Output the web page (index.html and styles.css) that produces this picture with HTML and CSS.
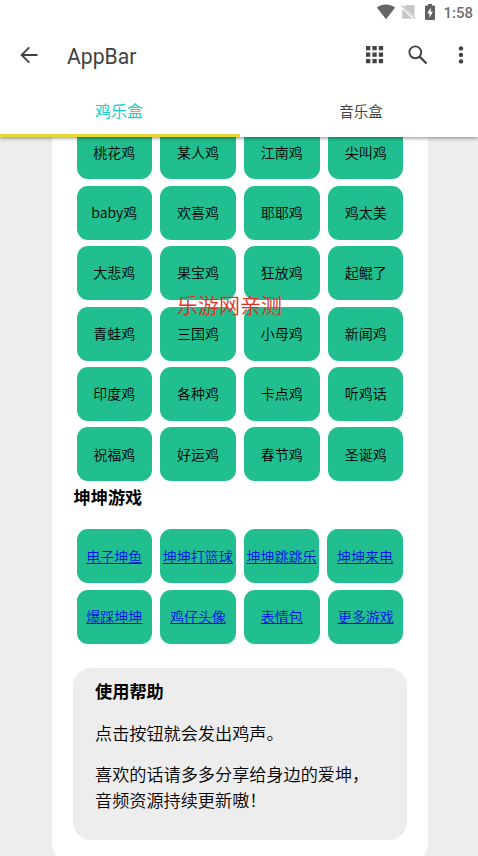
FILE: index.html
```html
<!DOCTYPE html>
<html lang="zh-CN">
<head>
<meta charset="utf-8">
<meta name="viewport" content="width=device-width, initial-scale=1">
<title>AppBar</title>
<link rel="stylesheet" href="styles.css">
</head>
<body>
<header class="header">
  <div class="status">
    <svg class="wifi" width="20" height="16" viewBox="0 0 20 16"><path d="M.8 3.6C6-.5 14-.5 19.200 3.600L10 15.300Z" fill="#666"/></svg>
    <svg class="sim" width="15" height="16" viewBox="0 0 15 16"><path d="M5 1h7.500q1 0 1 1v10.500L3.300 2.700ZM1.200 4.800 11.200 14.800H2.200q-1 0-1-1Z" fill="#c6c6c6"/><path d="M.8 1.500 14 14.700" stroke="#bbb" stroke-width="1.100"/></svg>
    <svg class="battery" width="10" height="16" viewBox="0 0 10 16"><path d="M3 0h4v1.500h2q1 0 1 1V15q0 1-1 1H1q-1 0-1-1V2.500q0-1 1-1h2Z" fill="#616161"/><path d="M5.800 3.700 2.200 9.500h2.300v4.200L7.900 7.800H5.800Z" fill="#fff"/></svg>
    <span class="clock">1:58</span>
  </div>
  <div class="toolbar">
    <svg class="back" width="18" height="18" viewBox="0 0 18 18" fill="none" stroke="#424242" stroke-width="1.900"><path d="M17.500 9H2M9.300 1.300 1.600 9l7.700 7.700"/></svg>
    <h1 class="title">AppBar</h1>
    <svg class="apps" width="18" height="18" viewBox="0 0 18 18" fill="#424242"><path d="M0 0h4.300v4.300H0zM6.400 0h4.300v4.300H6.400zM12.800 0h4.300v4.300H12.800zM0 6.500h4.300v4.300H0zM6.400 6.500h4.300v4.300H6.400zM12.800 6.500h4.300v4.300H12.800zM0 13h4.300v4.300H0zM6.400 13h4.300v4.300H6.400zM12.800 13h4.300v4.300H12.800z"/></svg>
    <svg class="search" width="20" height="20" viewBox="0 0 20 20" fill="none" stroke="#424242"><circle cx="7.300" cy="7.300" r="5.900" stroke-width="1.900"/><path d="m11.600 11.600 6.900 6.900" stroke-width="2.200"/></svg>
    <svg class="more" width="6" height="18" viewBox="0 0 6 18" fill="#424242"><circle cx="3" cy="2.400" r="2.200"/><circle cx="3" cy="8.900" r="2.200"/><circle cx="3" cy="15.400" r="2.200"/></svg>
  </div>
  <nav class="tabs">
    <div class="tab active">鸡乐盒</div>
    <div class="tab">音乐盒</div>
  </nav>
</header>
<main class="view">
  <div class="card">
    <div class="grid sounds">
      <div class="btn">桃花鸡</div><div class="btn">某人鸡</div><div class="btn">江南鸡</div><div class="btn">尖叫鸡</div>
      <div class="btn">baby鸡</div><div class="btn">欢喜鸡</div><div class="btn">耶耶鸡</div><div class="btn">鸡太美</div>
      <div class="btn">大悲鸡</div><div class="btn">果宝鸡</div><div class="btn">狂放鸡</div><div class="btn">起鲲了</div>
      <div class="btn">青蛙鸡</div><div class="btn">三国鸡</div><div class="btn">小母鸡</div><div class="btn">新闻鸡</div>
      <div class="btn">印度鸡</div><div class="btn">各种鸡</div><div class="btn">卡点鸡</div><div class="btn">听鸡话</div>
      <div class="btn">祝福鸡</div><div class="btn">好运鸡</div><div class="btn">春节鸡</div><div class="btn">圣诞鸡</div>
    </div>
    <h2 class="section">坤坤游戏</h2>
    <div class="grid compact">
      <a class="btn" href="#">电子坤鱼</a><a class="btn" href="#">坤坤打篮球</a><a class="btn" href="#">坤坤跳跳乐</a><a class="btn" href="#">坤坤来电</a>
    </div>
    <div class="grid last">
      <a class="btn" href="#">爆踩坤坤</a><a class="btn" href="#">鸡仔头像</a><a class="btn" href="#">表情包</a><a class="btn" href="#">更多游戏</a>
    </div>
    <section class="help">
      <h2>使用帮助</h2>
      <p>点击按钮就会发出鸡声。</p>
      <p>喜欢的话请多多分享给身边的爱坤，<br>音频资源持续更新嗷！</p>
    </section>
  </div>
</main>
<div class="watermark">乐游网亲测</div>
</body>
</html>
```
FILE: styles.css
```css
* { box-sizing: border-box; }
body {
  margin: 0;
  height: 856px;
  overflow: hidden;
  display: flex;
  flex-direction: column;
  background: #ededed;
  color: #000;
  font-family: "Noto Sans CJK SC", sans-serif;
  font-weight: 350;
}
.header {
  position: relative;
  z-index: 1;
  flex: none;
  height: 137px;
  background: #fff;
  box-shadow: 0 1px 4px rgba(0, 0, 0, .45);
}
.status {
  height: 24px;
  display: flex;
  align-items: center;
  justify-content: flex-end;
  padding-right: 5px;
}
.sim { margin-left: 5px; }
.battery { margin-left: 9.5px; }
.clock {
  margin-left: 8px;
  font: 500 15px/24px Roboto, sans-serif;
  color: #707070;
  padding-top: 2px;
}
.toolbar {
  height: 62px;
  display: flex;
  align-items: center;
  padding: 0 14.5px 0 19.5px;
}
.title {
  margin: 3px auto 0 29.5px;
  font: 400 21.2px/28px Roboto, sans-serif;
  color: #424242;
}
.search { margin-left: 24px; }
.more { margin-left: 30px; }
.tabs { display: flex; height: 51px; }
.tab {
  flex: 1;
  border-bottom: 3px solid transparent;
  padding-left: 4px;
  text-align: center;
  font-size: 14.5px;
  font-weight: 400;
  line-height: 49px;
  color: #424242;
}
.active {
  flex: 0 0 240px;
  padding: 0 2px 0 0;
  font-size: 16px;
  color: #1bd1c5;
  border-color: #e8d936;
}
.view { flex: 1; min-height: 0; overflow: hidden; }
.card {
  width: 376px;
  height: 727px;
  margin: 0 auto 0 52px;
  padding: 0 21px;
  background: #fff;
  border-radius: 0 0 21px 21px;
  display: flow-root;
}
.grid {
  display: grid;
  grid-template-columns: repeat(4, 75.5px);
  column-gap: 8.3px;
  row-gap: 6.4px;
  grid-auto-rows: 54px;
  padding-left: 3.5px;
}
.sounds { margin-top: -11.600px; }
.compact { column-gap: 8.1px; }
.last { margin-top: 6.2px; }
.btn {
  display: flex;
  align-items: center;
  justify-content: center;
  padding-bottom: 1.4px;
  background: #21be8f;
  border-radius: 11px;
  font-size: 14px;
  line-height: 20px;
  white-space: nowrap;
  color: #000;
}
a.btn {
  color: #0010e0;
  text-decoration: underline;
  text-decoration-skip-ink: none;
}
.section {
  margin: 3px 0 19px .5px;
  font-size: 17.2px;
  line-height: 26px;
  font-weight: 700;
}
.help {
  margin-top: 24.7px;
  height: 171.300px;
  padding: 10px 22px;
  background: #ededed;
  border-radius: 18px;
  font-size: 17.15px;
  line-height: 25.6px;
}
.help h2 { margin: 0 0 16px; font-size: 17.2px; font-weight: 700; }
.help p { margin: 0 0 16px; white-space: nowrap; }
.watermark {
  position: absolute;
  z-index: 2;
  left: 177px;
  top: 289px;
  font-size: 21px;
  line-height: 30px;
  color: #e03020;
}
```
